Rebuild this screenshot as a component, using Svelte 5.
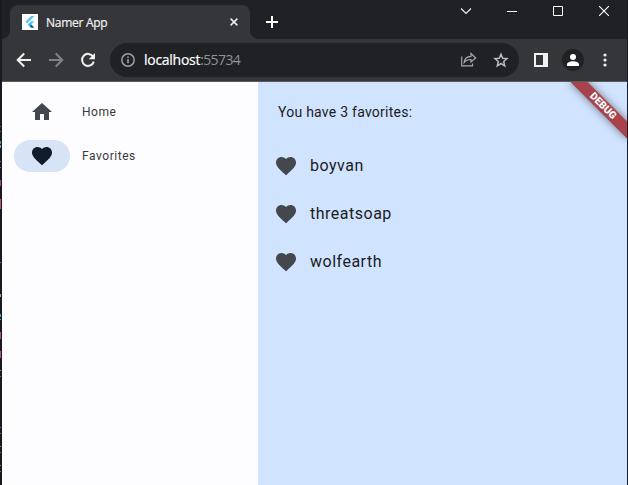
<script>
  const heart =
    'M12 21.35l-1.45-1.32C5.4 15.36 2 12.28 2 8.5 2 5.42 4.42 3 7.5 3c1.74 0 3.41.81 4.5 2.09C13.09 3.81 14.76 3 16.5 3 19.58 3 22 5.42 22 8.5c0 3.78-3.4 6.86-8.55 11.54L12 21.35z';
  const home = 'M10 20v-6h4v6h5v-8h3L12 3 2 12h3v8z';
  const nav = [
    { label: 'Home', icon: home, selected: false },
    { label: 'Favorites', icon: heart, selected: true }
  ];
  const favorites = ['boyvan', 'threatsoap', 'wolfearth'];

  // Slivers of code visible in the editor behind the window: [top, height, colour]
  const slivers = [
    [126, 1, '#55616b'], [131, 1, '#55616b'], [141, 3, '#4f9a76'], [145, 3, '#53b5b5'],
    [161, 1, '#a94a72'], [167, 1, '#a94a72'], [180, 4, '#8b4a96'], [184, 2, '#a94a52'],
    [199, 10, '#c2506e'], [262, 1, '#b04a76'], [294, 3, '#a9a58a'],
    [314, 3, '#5ba5a5'], [319, 1, '#5ba5a5'], [332, 7, '#b5527c'], [351, 7, '#b5527c'],
    [370, 1, '#c08040'], [376, 1, '#b05a20'], [427, 1, '#a94a82'], [433, 1, '#a94a82'],
    [446, 1, '#b57830'], [452, 1, '#a95020'], [465, 1, '#b57830'], [471, 1, '#a95020']
  ];
</script>

<div class="desktop">
  {#each slivers as [top, height, color]}
    <i class="sliver" style="top:{top}px;height:{height}px;background:{color}"></i>
  {/each}

  <div class="window">
    <header class="titlebar">
      <div class="tab">
        <svg class="favicon" width="16" height="16" viewBox="0 0 16 16">
          <path fill="#fff" d="M0 0h16v16H0z" />
          <path fill="#54c5f8" d="M9.2 2h3.3L5.2 9.3 3.5 7.7z" />
          <path fill="#54c5f8" d="M9.2 7.3h3.3L9.2 10.5l-1.7 1.7-1.6-1.6z" />
          <path fill="#01579b" d="M7.5 12.2l1.7-1.7 3.3 3.3H9.2z" />
          <path fill="#29b6f6" d="M5.9 10.6l1.6-1.7 1.7 1.6-1.7 1.7z" />
        </svg>
        <span class="tab-title">Namer App</span>
        <svg width="8" height="8" viewBox="0 0 8 8"><path d="M.6.6l6.8 6.8M7.4.6L.6 7.4" stroke="#eee" stroke-width="1.5" /></svg>
      </div>
      <svg class="plus" width="12" height="12" viewBox="0 0 12 12"><path d="M6 0v12M0 6h12" stroke="#fff" stroke-width="2" /></svg>
      <div class="controls">
        <span><svg width="12" height="8" viewBox="0 0 12 8"><path d="M1 1.5l5 5 5-5" fill="none" stroke="#eee" stroke-width="1.2" /></svg></span>
        <span><svg width="10" height="10" viewBox="0 0 10 10"><path d="M0 5.5h10" stroke="#fff" /></svg></span>
        <span><svg width="10" height="10" viewBox="0 0 10 10"><path d="M.5.5h9v9h-9z" fill="none" stroke="#fff" /></svg></span>
        <span><svg width="10" height="10" viewBox="0 0 10 10"><path d="M0 0l10 10M10 0L0 10" stroke="#fff" stroke-width="1.1" /></svg></span>
      </div>
    </header>

    <div class="toolbar">
      <svg class="back" width="16" height="16" viewBox="0 0 16 16"><path d="M15 8H2M8.2 1.5L1.7 8l6.5 6.5" fill="none" stroke="#f1f1f1" stroke-width="2" /></svg>
      <svg class="forward" width="16" height="16" viewBox="0 0 16 16"><path d="M1 8h13M7.800 1.500L14.300 8l-6.500 6.500" fill="none" stroke="#828386" stroke-width="2" /></svg>
      <svg class="reload" width="16" height="16" viewBox="0 0 16 16"><path d="M13.100 4.600A6 6 0 1 0 13.800 9.600" fill="none" stroke="#f1f1f1" stroke-width="2" /><path d="M15 1v6.300H8.700z" fill="#f1f1f1" /></svg>
      <div class="omnibox">
        <svg width="14" height="14" viewBox="0 0 14 14"><circle cx="7" cy="7" r="6.200" fill="none" stroke="#9aa0a6" stroke-width="1.500" /><path d="M7 6v4.300M7 3.400v1.500" stroke="#9aa0a6" stroke-width="1.600" /></svg>
        <span class="url">localhost<em>:55734</em></span>
        <svg class="share" width="16" height="15" viewBox="0 0 16 15"><path d="M.7 4.500v9.300h10.800v-2.300M3.200 10.500c.3-3.700 2.700-6 6.800-6.200V1.500L14.700 6 10 10V7.500c-3 0-5.200.900-6.800 3z" fill="none" stroke="#a5a8ab" stroke-width="1.200" /></svg>
        <svg width="16" height="16" viewBox="0 0 16 16"><path d="M8 2.200l1.700 4 4.300.4-3.300 2.900 1 4.300L8 11.500l-3.700 2.300 1-4.300L2 6.600l4.300-.4z" fill="none" stroke="#b9bcc0" stroke-width="1.500" /></svg>
      </div>
      <svg class="panel" width="14" height="14" viewBox="0 0 14 14"><path fill="#f1f1f1" fill-rule="evenodd" d="M0 0h14v14H0zM2 2v10h7V2z" /></svg>
      <span class="avatar"><svg width="12" height="12" viewBox="0 0 12 12"><circle cx="6" cy="3" r="3" fill="#fff" /><path d="M0 12v-1.700C0 8.300 3.500 7.300 6 7.300s6 1 6 3V12z" fill="#fff" /></svg></span>
      <svg width="4" height="14" viewBox="0 0 4 14" fill="#f1f1f1"><circle cx="2" cy="2" r="1.600" /><circle cx="2" cy="7" r="1.600" /><circle cx="2" cy="12" r="1.600" /></svg>
    </div>

    <main>
      <nav>
        {#each nav as item}
          <div class="destination">
            <span class="indicator" class:selected={item.selected}>
              <svg width="24" height="24" viewBox="0 0 24 24"><path d={item.icon} /></svg>
            </span>
            <span>{item.label}</span>
          </div>
        {/each}
      </nav>
      <section>
        <p>You have {favorites.length} favorites:</p>
        {#each favorites as name}
          <div class="favorite">
            <svg width="24" height="24" viewBox="0 0 24 24"><path d={heart} /></svg>
            <span>{name}</span>
          </div>
        {/each}
        <div class="banner">DEBUG</div>
      </section>
    </main>
  </div>
</div>

<style>
  :global(body) { overflow: hidden; }
  .desktop {
    position: relative;
    box-sizing: border-box;
    width: 628px;
    height: 485px;
    padding: 0 1px 0 2px;
    background: #181923;
  }
  svg { display: block; flex: none; }
  .sliver { position: absolute; left: 0; width: 1px; }
  .window { display: flex; flex-direction: column; height: 100%; background: #202124; }
  .titlebar { display: flex; height: 39px; padding-left: 8px; font-family: "Open Sans", "Noto Sans", sans-serif; }
  .tab {
    position: relative;
    display: flex;
    align-items: center;
    box-sizing: border-box;
    width: 240px;
    height: 34px;
    margin-top: 5px;
    padding: 0 12px;
    border-radius: 8px 8px 0 0;
    background: #35363a;
  }
  .tab::before, .tab::after { content: ""; position: absolute; bottom: 0; width: 8px; height: 8px; }
  .tab::before { left: -8px; background: radial-gradient(circle at 0 0, transparent 7.5px, #35363a 8px); }
  .tab::after { right: -8px; background: radial-gradient(circle at 100% 0, transparent 7.5px, #35363a 8px); }
  .tab-title { flex: 1; margin-left: 8px; color: #f1f1f1; font-size: 12px; letter-spacing: -0.28px; white-space: nowrap; -webkit-text-stroke: 0.2px; }
  .plus { margin: 16px 0 0 16px; }
  .controls { display: flex; margin-left: auto; height: 22px; }
  .controls span { display: flex; align-items: center; justify-content: center; width: 46px; }
  .toolbar {
    display: flex;
    align-items: center;
    box-sizing: border-box;
    height: 43px;
    padding: 0 20px 1px 14px;
    border-bottom: 1px solid #5a5a5e;
    background: #35363a;
  }
  .forward, .reload { margin-left: 16px; }
  .omnibox {
    display: flex;
    flex: none;
    align-items: center;
    box-sizing: border-box;
    width: 409px;
    height: 34px;
    margin-left: 14px;
    padding: 0 10px 0 11px;
    border-radius: 17px;
    background: #202124;
  }
  .url { flex: 1; margin-left: 9px; color: #fff; font: 14px "Open Sans", "Noto Sans", sans-serif; letter-spacing: -0.28px; -webkit-text-stroke: 0.2px; }
  .url em { color: #8f9296; font-style: normal; letter-spacing: -0.6px; -webkit-text-stroke: 0; }
  .share { margin-right: 16px; }
  .panel { margin-left: 15px; }
  .avatar {
    display: flex;
    flex: none;
    align-items: center;
    justify-content: center;
    width: 22px;
    height: 22px;
    margin: 0 19px 0 14px;
    border-radius: 50%;
    background: #202124;
  }
  main { display: flex; flex: 1; font-family: Roboto, sans-serif; }
  nav { box-sizing: border-box; width: 256px; padding: 14px 12px; background: #fdfcff; }
  .destination { display: flex; align-items: center; height: 32px; margin-bottom: 12px; color: #36393e; font-size: 12px; letter-spacing: 0.55px; }
  .indicator { display: flex; align-items: center; justify-content: center; width: 56px; height: 32px; margin-right: 12px; border-radius: 16px; fill: #43474e; }
  .indicator.selected { background: #d7e3f7; fill: #101c2b; }
  section { position: relative; flex: 1; overflow: hidden; background: #d1e4ff; color: #1a1c1e; }
  p { margin: 20px 0 20px 20px; font-size: 14px; line-height: 20px; letter-spacing: 0.25px; }
  .favorite { display: flex; align-items: center; gap: 12px; height: 48px; padding-left: 16px; font-size: 16px; letter-spacing: 0.5px; }
  .favorite svg { fill: #43474e; }
  .favorite span { line-height: 20px; padding-bottom: 1px; }
  .banner {
    position: absolute;
    top: 18px;
    right: -16px;
    width: 80px;
    height: 12px;
    background: #a8434b;
    box-shadow: 0 0 8px rgba(0, 0, 0, 0.5);
    color: #fff;
    font-size: 10.2px;
    font-weight: 900;
    line-height: 12px;
    text-align: center;
    transform: rotate(45deg);
  }
</style>
